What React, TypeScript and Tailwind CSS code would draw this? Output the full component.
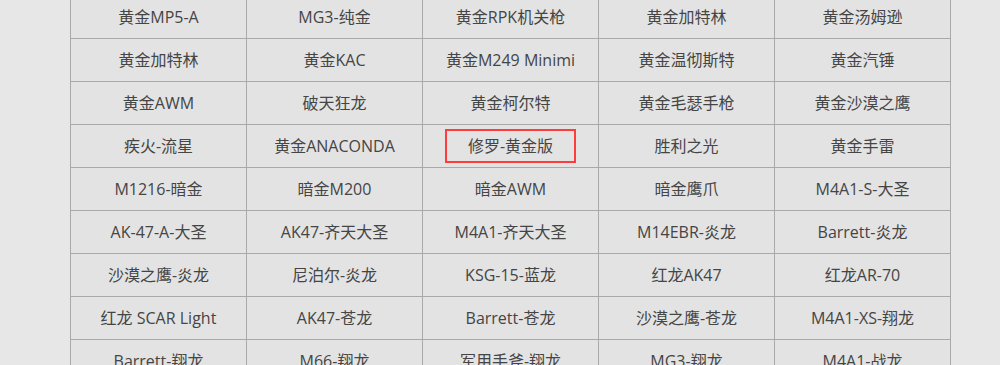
import React from 'react'

const rows: string[][] = [
  ['黄金MP5-A', 'MG3-纯金', '黄金RPK机关枪', '黄金加特林', '黄金汤姆逊'],
  ['黄金加特林', '黄金KAC', '黄金M249 Minimi', '黄金温彻斯特', '黄金汽锤'],
  ['黄金AWM', '破天狂龙', '黄金柯尔特', '黄金毛瑟手枪', '黄金沙漠之鹰'],
  ['疾火-流星', '黄金ANACONDA', '修罗-黄金版', '胜利之光', '黄金手雷'],
  ['M1216-暗金', '暗金M200', '暗金AWM', '暗金鹰爪', 'M4A1-S-大圣'],
  ['AK-47-A-大圣', 'AK47-齐天大圣', 'M4A1-齐天大圣', 'M14EBR-炎龙', 'Barrett-炎龙'],
  ['沙漠之鹰-炎龙', '尼泊尔-炎龙', 'KSG-15-蓝龙', '红龙AK47', '红龙AR-70'],
  ['红龙 SCAR Light', 'AK47-苍龙', 'Barrett-苍龙', '沙漠之鹰-苍龙', 'M4A1-XS-翔龙'],
  ['Barrett-翔龙', 'M66-翔龙', '军用手斧-翔龙', 'MG3-翔龙', 'M4A1-战龙'],
]

const highlighted = '修罗-黄金版'

const App = () => {
  return (
    <div
      className="h-[365px] w-[1000px] overflow-hidden bg-[#e7e7e7]"
      style={{ fontFamily: '"Open Sans", "Noto Sans CJK SC", sans-serif' }}
    >
      <table className="ml-[70px] mt-[-5px] w-[881px] table-fixed border-collapse text-[16px] text-[#454545]">
        <tbody>
          {rows.map((row, i) => (
            <tr key={i} className="h-[43px]">
              {row.map((name) => (
                <td
                  key={name}
                  className="w-[176px] border border-[#a9a9a9] bg-[#e3e3e3] p-0 text-center leading-[20px]"
                >
                  {name === highlighted ? (
                    <span className="inline-block border-2 border-[#ff3c3c] px-[21px] py-[5px]">
                      {name}
                    </span>
                  ) : (
                    name
                  )}
                </td>
              ))}
            </tr>
          ))}
        </tbody>
      </table>
    </div>
  )
}

export default App
